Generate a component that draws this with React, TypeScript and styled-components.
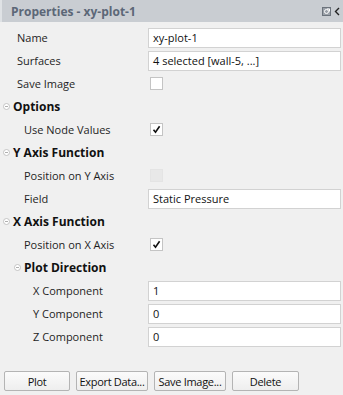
import React from "react";
import styled, { createGlobalStyle } from "styled-components";

const Global = createGlobalStyle`
  html, body { margin: 0; padding: 0; background: #f0f0f0; }
  body { font-family: "Open Sans", "Noto Sans", sans-serif; font-size: 11px; color: #1a1a1a; }
`;

const Panel = styled.div`
  width: 343px;
  height: 395px;
  display: flex;
  flex-direction: column;
  background: #f0f0f0;
  box-sizing: border-box;
  overflow: hidden;
`;

const Header = styled.div`
  height: 22px;
  background: #c9cdd2;
  display: flex;
  align-items: center;
  padding: 0 3px 0 9px;
  border-left: 2px solid #dfe2e5;
`;

const Title = styled.div`
  flex: 1;
  font-weight: 700;
  font-size: 12px;
  color: #5c6777;
`;

const HeaderIcons = styled.div`
  display: flex;
  align-items: center;
  gap: 3px;
`;

const Body = styled.div`
  flex: 1;
  display: flex;
  flex-direction: column;
  padding-top: 4px;
`;

const Row = styled.div<{ $indent: number }>`
  height: 23px;
  display: grid;
  grid-template-columns: 148px 1fr;
  align-items: center;
  padding-right: 2px;
  & > :first-child { padding-left: ${(p) => p.$indent}px; }
`;

const Label = styled.div`
  color: #1e1e1e;
`;

const Input = styled.div`
  height: 20px;
  box-sizing: border-box;
  border: 1px solid #d2d2d2;
  background: #fff;
  display: flex;
  align-items: center;
  padding-left: 4px;
  color: #111;
`;

const Box = styled.div<{ $disabled?: boolean }>`
  width: 13px;
  height: 13px;
  box-sizing: border-box;
  margin-left: 2px;
  border: 1px solid ${(p) => (p.$disabled ? "#e4e4e4" : "#c4c4c4")};
  background: ${(p) => (p.$disabled ? "#e8e8e8" : "#fff")};
  display: flex;
  align-items: center;
  justify-content: center;
`;

const Section = styled.div<{ $indent: number }>`
  height: 23px;
  display: flex;
  align-items: center;
  gap: 3px;
  padding-left: ${(p) => p.$indent}px;
  font-weight: 700;
  font-size: 12px;
  color: #111;
`;

const Buttons = styled.div`
  margin-top: auto;
  display: flex;
  gap: 6px;
  padding: 0 0 4px 4px;
`;

const Button = styled.button<{ $w: number }>`
  width: ${(p) => p.$w}px;
  height: 20px;
  box-sizing: border-box;
  border: 1px solid #b4b4b4;
  border-radius: 2px;
  background: linear-gradient(#fbfbfb, #eeeeee);
  font-family: "Open Sans", "Noto Sans", sans-serif;
  font-size: 11px;
  letter-spacing: -0.3px;
  white-space: nowrap;
  color: #111;
  padding: 0;
  display: flex;
  align-items: center;
  justify-content: center;
`;

const Minus = () => (
  <svg width="7" height="7" viewBox="0 0 7 7">
    <circle cx="3.5" cy="3.5" r="3" fill="#fff" stroke="#b8b8b8" strokeWidth="0.8" />
    <line x1="2" y1="3.5" x2="5" y2="3.5" stroke="#9a9a9a" strokeWidth="0.8" />
  </svg>
);

const Check = () => (
  <svg width="9" height="9" viewBox="0 0 9 9">
    <path d="M1.5 4.8 L3.5 7.2 L7.6 1.2" fill="none" stroke="#111" strokeWidth="1.6" />
  </svg>
);

const CheckBox = ({ checked, disabled }: { checked?: boolean; disabled?: boolean }) => (
  <div>
    <Box $disabled={disabled}>{checked && <Check />}</Box>
  </div>
);

export default function App() {
  return (
    <>
      <Global />
      <Panel>
        <Header>
          <Title>Properties - xy-plot-1</Title>
          <HeaderIcons>
            <svg width="9" height="9" viewBox="0 0 9 9">
              <rect x="0.5" y="0.5" width="8" height="8" fill="#9aa0a8" stroke="#6c737c" />
              <circle cx="4.5" cy="4.5" r="2" fill="none" stroke="#fff" strokeWidth="1" />
              <path d="M5 2 L7.5 2 L7.5 4.5" fill="none" stroke="#fff" strokeWidth="1" />
            </svg>
            <svg width="6" height="9" viewBox="0 0 6 9">
              <path d="M5 1 L1.5 4.5 L5 8" fill="none" stroke="#222" strokeWidth="1.4" />
            </svg>
          </HeaderIcons>
        </Header>
        <Body>
          <Row $indent={17}><Label>Name</Label><Input>xy-plot-1</Input></Row>
          <Row $indent={17}><Label>Surfaces</Label><Input>4 selected [wall-5, ...]</Input></Row>
          <Row $indent={17}><Label>Save Image</Label><CheckBox /></Row>
          <Section $indent={3}><Minus />Options</Section>
          <Row $indent={24}><Label>Use Node Values</Label><CheckBox checked /></Row>
          <Section $indent={3}><Minus />Y Axis Function</Section>
          <Row $indent={24}><Label>Position on Y Axis</Label><CheckBox disabled /></Row>
          <Row $indent={24}><Label>Field</Label><Input>Static Pressure</Input></Row>
          <Section $indent={3}><Minus />X Axis Function</Section>
          <Row $indent={24}><Label>Position on X Axis</Label><CheckBox checked /></Row>
          <Section $indent={14}><Minus />Plot Direction</Section>
          <Row $indent={33}><Label>X Component</Label><Input>1</Input></Row>
          <Row $indent={33}><Label>Y Component</Label><Input>0</Input></Row>
          <Row $indent={33}><Label>Z Component</Label><Input>0</Input></Row>
          <Buttons>
            <Button $w={66}>Plot</Button>
            <Button $w={72}>Export Data...</Button>
            <Button $w={72}>Save Image...</Button>
            <Button $w={67}>Delete</Button>
          </Buttons>
        </Body>
      </Panel>
    </>
  );
}
